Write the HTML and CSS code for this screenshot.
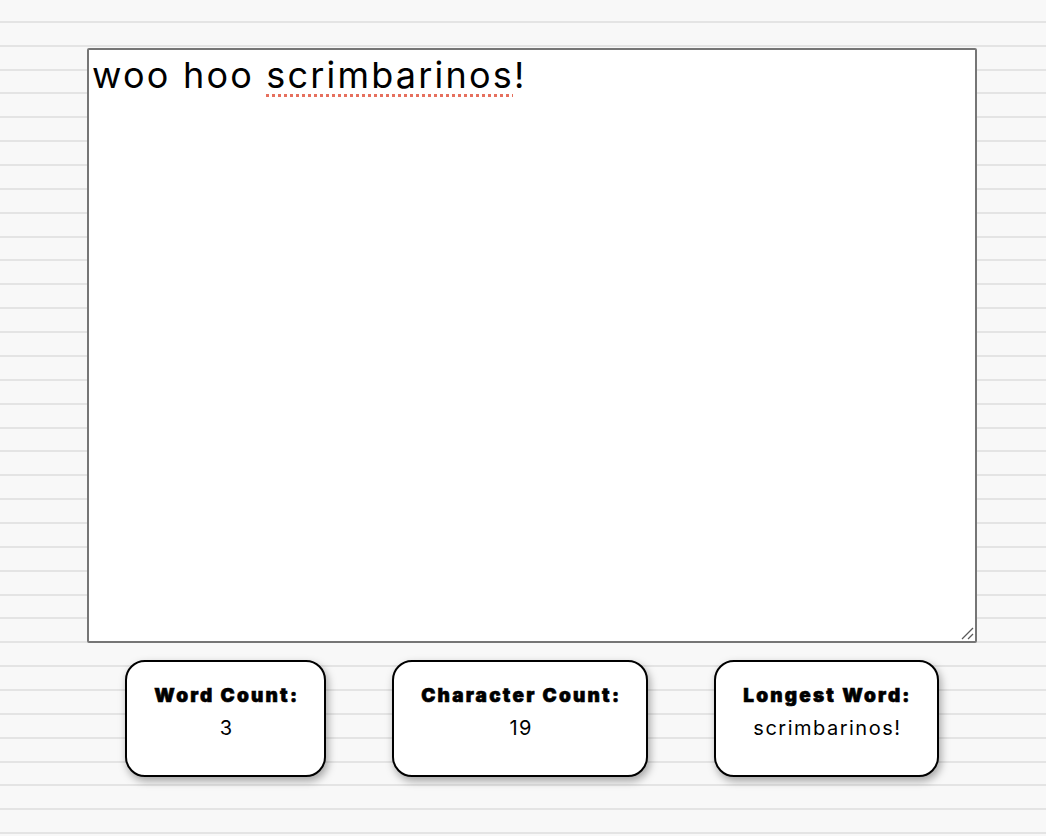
FILE: index.html
```html
<!DOCTYPE html>
<html lang="en">
<head>
<meta charset="utf-8">
<title>Word Counter</title>
<link rel="stylesheet" href="styles.css">
</head>
<body>
<main class="app">
  <div class="editor" role="textbox" aria-multiline="true">
    <p class="editor-text">woo hoo <span class="misspelled">scrimbarinos</span>!</p>
    <svg class="grip" width="14" height="14" viewBox="0 0 14 14" aria-hidden="true">
      <line x1="2" y1="13" x2="13" y2="2" stroke="#5a5a5a" stroke-width="1.3"/>
      <line x1="8" y1="13" x2="13" y2="8" stroke="#5a5a5a" stroke-width="1.3"/>
    </svg>
  </div>
  <section class="stats">
    <div class="stat">
      <h2 class="stat-title">Word Count:</h2>
      <p class="stat-value">3</p>
    </div>
    <div class="stat">
      <h2 class="stat-title">Character Count:</h2>
      <p class="stat-value">19</p>
    </div>
    <div class="stat">
      <h2 class="stat-title">Longest Word:</h2>
      <p class="stat-value">scrimbarinos!</p>
    </div>
  </section>
</main>
</body>
</html>
```

FILE: styles.css
```css
html, body {
  margin: 0;
  padding: 0;
}

body {
  min-height: 836px;
  background-color: #f8f8f8;
  background-image: repeating-linear-gradient(
    to bottom,
    transparent 0px,
    transparent 20.9px,
    #e4e4e4 20.9px,
    #e4e4e4 22.9px,
    transparent 22.9px,
    transparent 23.86px
  );
  font-family: "Inter", "Liberation Sans", sans-serif;
  color: #000;
}

.app {
  display: flex;
  flex-direction: column;
  align-items: center;
  padding-top: 48px;
  padding-left: 18px;
}

.editor {
  position: relative;
  box-sizing: border-box;
  width: 890px;
  height: 595px;
  background: #fff;
  border: 2px solid #767676;
  border-radius: 2px;
  padding: 2px 3px;
}

.editor-text {
  margin: 0;
  font-size: 36px;
  line-height: 46px;
  letter-spacing: 2.2px;
  font-weight: 400;
}

.misspelled {
  text-decoration: underline dotted #e6705e;
  text-decoration-thickness: 3px;
  text-underline-offset: 6px;
}

.grip {
  position: absolute;
  right: 1px;
  bottom: 1px;
}

.stats {
  display: flex;
  gap: 66px;
  margin-top: 17px;
}

.stat {
  box-sizing: border-box;
  height: 117px;
  padding: 22px 25px 0 27px;
  background: #fff;
  border: 2px solid #000;
  border-radius: 20px;
  box-shadow: 2px 4px 8px rgba(0, 0, 0, 0.35);
  text-align: center;
}

.stat-title {
  margin: 0;
  font-size: 19px;
  font-weight: 900;
  line-height: 24px;
  letter-spacing: 2.2px;
  -webkit-text-stroke: 0.6px #000;
}

.stat-value {
  margin: 6px 0 0;
  font-size: 20px;
  font-weight: 400;
  line-height: 28px;
  letter-spacing: 1.5px;
}
```
